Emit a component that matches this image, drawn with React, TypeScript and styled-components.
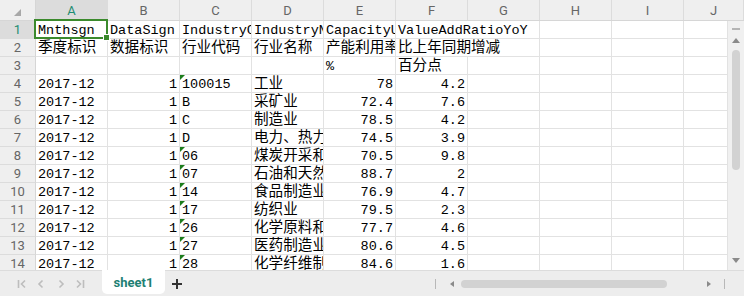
import React from 'react';
import styled, {createGlobalStyle, css} from 'styled-components';

const GlobalStyle = createGlobalStyle`
  html, body {
    margin: 0;
    padding: 0;
    overflow: hidden;
    background: #ffffff;
  }
`;

const COLS = ['A', 'B', 'C', 'D', 'E', 'F', 'G', 'H', 'I', 'J'];
const GRID_COLS = '36px repeat(9, 72px) 44px';
const isCjk = (s: string) => /[\u3000-\u9fff]/.test(s);

const Frame = styled.div`
  width: 744px;
  height: 296px;
  display: flex;
  flex-direction: column;
  background: #ffffff;
  overflow: hidden;
`;

const ColHeaderRow = styled.div`
  display: grid;
  grid-template-columns: 36px repeat(9, 72px) 1fr;
  height: 21px;
  background: #efefef;
  box-sizing: border-box;
  border-bottom: 1px solid #d6d6d6;
`;

const Corner = styled.div`
  position: relative;
  border-right: 1px solid #d6d6d6;
  &::after {
    content: '';
    position: absolute;
    right: 14px;
    bottom: 4px;
    border-style: solid;
    border-width: 0 0 7px 7px;
    border-color: transparent transparent #a8a8a8 transparent;
  }
`;

const ColHeader = styled.div<{ $active?: boolean }>`
  display: flex;
  align-items: center;
  justify-content: center;
  font-family: Roboto, "Noto Sans", sans-serif;
  font-size: 13px;
  color: #666;
  box-sizing: border-box;
  border-right: 1px solid #dcdcdc;
  ${p => p.$active && css`
    background: #dcdcdc;
    color: #1f8c73;
  `}
`;

const Body = styled.div`
  display: flex;
  height: 249px;
  overflow: hidden;
`;

const CellGrid = styled.div`
  display: grid;
  grid-template-columns: ${GRID_COLS};
  grid-auto-rows: 18px;
  flex: 1;
  align-content: start;
  overflow: hidden;
`;

const RowHeader = styled.div<{ $active?: boolean }>`
  display: flex;
  align-items: center;
  justify-content: center;
  font-family: Roboto, "Noto Sans", sans-serif;
  font-size: 13px;
  color: #666;
  background: #efefef;
  box-sizing: border-box;
  border-right: 1px solid #d6d6d6;
  border-bottom: 1px solid #dcdcdc;
  ${p => p.$active && css`
    background: #dcdcdc;
    color: #1f8c73;
  `}
`;

const Cell = styled.div<{ $right?: boolean; $span?: number; $cjk?: boolean }>`
  position: relative;
  box-sizing: border-box;
  border-right: 1px solid #e2e2e2;
  border-bottom: 1px solid #e2e2e2;
  padding: 1px 2px 0 2px;
  font-family: "Liberation Mono", "Noto Sans CJK SC", monospace;
  font-size: ${p => (p.$cjk ? '14.6px' : '13.5px')};
  line-height: 17px;
  color: #000;
  white-space: nowrap;
  overflow: hidden;
  text-align: ${p => (p.$right ? 'right' : 'left')};
  grid-column: span ${p => p.$span ?? 1};
`;

const TextMark = styled.span`
  position: absolute;
  left: 0;
  top: 0;
  border-style: solid;
  border-width: 5px 5px 0 0;
  border-color: #1c7d1c transparent transparent transparent;
`;

const Selection = styled.div`
  position: absolute;
  left: 34px;
  top: 19px;
  width: 74px;
  height: 20px;
  box-sizing: border-box;
  border: 2px solid #3b8a2d;
  pointer-events: none;
  &::after {
    content: '';
    position: absolute;
    right: -4px;
    bottom: -4px;
    width: 5px;
    height: 5px;
    background: #3b8a2d;
    border: 1px solid #fff;
  }
`;

const VScroll = styled.div`
  width: 16px;
  background: #f0f0f0;
  display: flex;
  flex-direction: column;
  align-items: center;
  padding-top: 7px;
  box-sizing: border-box;
`;

const Dash = styled.div`
  width: 8px;
  height: 2px;
  background: #b4b4b4;
`;

const Arrow = styled.div<{ $dir: 'up' | 'down' | 'left' | 'right' }>`
  width: 0;
  height: 0;
  border-style: solid;
  ${p => p.$dir === 'up' && css`
    border-width: 0 4px 5px 4px;
    border-color: transparent transparent #8a8a8a transparent;
  `}
  ${p => p.$dir === 'down' && css`
    border-width: 5px 4px 0 4px;
    border-color: #8a8a8a transparent transparent transparent;
  `}
  ${p => p.$dir === 'left' && css`
    border-width: 3px 4px 3px 0;
    border-color: transparent #8a8a8a transparent transparent;
  `}
  ${p => p.$dir === 'right' && css`
    border-width: 3px 0 3px 4px;
    border-color: transparent transparent transparent #8a8a8a;
  `}
`;

const Gap = styled.div<{ $w?: number; $h?: number }>`
  flex: none;
  width: ${p => p.$w ?? 0}px;
  height: ${p => p.$h ?? 0}px;
`;

const VThumb = styled.div`
  width: 8px;
  height: 120px;
  margin-top: 7px;
  border-radius: 4px;
  background: #d2d2d2;
`;

const VSpacer = styled.div`
  flex: 1;
`;

const TabBar = styled.div`
  height: 26px;
  background: #ededed;
  border-top: 1px solid #dcdcdc;
  box-sizing: border-box;
  display: flex;
  align-items: flex-start;
`;

const NavGroup = styled.div`
  display: flex;
  align-items: center;
  height: 25px;
  padding-left: 12px;
  width: 90px;
  box-sizing: border-box;
`;

const NavBtn = styled.div`
  width: 21px;
  height: 25px;
  display: flex;
  align-items: center;
  justify-content: center;
  color: #bdbdbd;
`;

const Tab = styled.div`
  margin-left: 12px;
  width: 63px;
  height: 24px;
  margin-top: -1px;
  background: #fff;
  border-radius: 0 0 5px 5px;
  display: flex;
  align-items: center;
  justify-content: center;
  font-family: Roboto, "Noto Sans", sans-serif;
  font-weight: 700;
  font-size: 13px;
  color: #1e7f73;
`;

const AddTab = styled.div`
  width: 24px;
  height: 25px;
  display: flex;
  align-items: center;
  justify-content: center;
  color: #333;
`;

const HScroll = styled.div`
  margin-left: auto;
  display: flex;
  align-items: center;
  height: 25px;
  padding-right: 19px;
`;

const Bar = styled.div`
  width: 1px;
  height: 10px;
  background: #b8b8b8;
`;

const HThumb = styled.div`
  width: 206px;
  height: 8px;
  border-radius: 4px;
  background: #d2d2d2;
`;

type Row = [string, string, string, string, string, string];

const rows: Row[] = [
    ['2017-12', '1', '100015', '工业', '78', '4.2'],
    ['2017-12', '1', 'B', '采矿业', '72.4', '7.6'],
    ['2017-12', '1', 'C', '制造业', '78.5', '4.2'],
    ['2017-12', '1', 'D', '电力、热力生产和供应业', '74.5', '3.9'],
    ['2017-12', '1', '06', '煤炭开采和洗选业', '70.5', '9.8'],
    ['2017-12', '1', '07', '石油和天然气开采业', '88.7', '2'],
    ['2017-12', '1', '14', '食品制造业', '76.9', '4.7'],
    ['2017-12', '1', '17', '纺织业', '79.5', '2.3'],
    ['2017-12', '1', '26', '化学原料和化学制品制造业', '77.7', '4.6'],
    ['2017-12', '1', '27', '医药制造业', '80.6', '4.5'],
    ['2017-12', '1', '28', '化学纤维制造业', '84.6', '1.6'],
];

const Empty: React.FC<{ n: number }> = ({n}) => (
    <>{Array.from({length: n}, (_, i) => <Cell key={i}/>)}</>
);

const Text: React.FC<{ v: string; right?: boolean; span?: number }> = ({v, right, span}) => (
    <Cell $right={right} $span={span} $cjk={isCjk(v)}>{v}</Cell>
);

const NavIcon: React.FC<{ kind: 'first' | 'prev' | 'next' | 'last' }> = ({kind}) => (
    <svg width="12" height="12" viewBox="0 0 12 12" fill="none" stroke="currentColor" strokeWidth="1.6">
        {kind === 'first' && <><path d="M2.5 2v8"/><path d="M9 2.5L5.5 6 9 9.5"/></>}
        {kind === 'prev' && <path d="M7.5 2.5L4 6l3.5 3.5"/>}
        {kind === 'next' && <path d="M4.5 2.5L8 6l-3.5 3.5"/>}
        {kind === 'last' && <><path d="M3 2.5L6.5 6 3 9.5"/><path d="M9.5 2v8"/></>}
    </svg>
);

export default function App() {
    return (
        <Frame>
            <GlobalStyle/>
            <ColHeaderRow>
                <Corner/>
                {COLS.map(c => <ColHeader key={c} $active={c === 'A'}>{c}</ColHeader>)}
            </ColHeaderRow>
            <Body>
                <CellGrid>
                    <RowHeader $active>1</RowHeader>
                    <Text v="Mnthsgn"/>
                    <Text v="DataSign"/>
                    <Text v="IndustryCode"/>
                    <Text v="IndustryName"/>
                    <Text v="CapacityUtilization"/>
                    <Text v="ValueAddRatioYoY" span={2}/>
                    <Empty n={3}/>

                    <RowHeader>2</RowHeader>
                    <Text v="季度标识"/>
                    <Text v="数据标识"/>
                    <Text v="行业代码"/>
                    <Text v="行业名称"/>
                    <Text v="产能利用率"/>
                    <Text v="比上年同期增减" span={2}/>
                    <Empty n={3}/>

                    <RowHeader>3</RowHeader>
                    <Empty n={4}/>
                    <Text v="%"/>
                    <Text v="百分点"/>
                    <Empty n={4}/>

                    {rows.map((r, i) => (
                        <React.Fragment key={i}>
                            <RowHeader>{i + 4}</RowHeader>
                            <Text v={r[0]}/>
                            <Text v={r[1]} right/>
                            <Cell>
                                {/^\d+$/.test(r[2]) && <TextMark/>}
                                {r[2]}
                            </Cell>
                            <Text v={r[3]}/>
                            <Text v={r[4]} right/>
                            <Text v={r[5]} right/>
                            <Empty n={4}/>
                        </React.Fragment>
                    ))}
                </CellGrid>
                <VScroll>
                    <Dash/>
                    <Gap $h={8}/>
                    <Arrow $dir="up"/>
                    <VThumb/>
                    <VSpacer/>
                    <Arrow $dir="down"/>
                    <Gap $h={7}/>
                </VScroll>
            </Body>
            <TabBar>
                <NavGroup>
                    <NavBtn><NavIcon kind="first"/></NavBtn>
                    <NavBtn><NavIcon kind="prev"/></NavBtn>
                    <NavBtn><NavIcon kind="next"/></NavBtn>
                    <NavBtn><NavIcon kind="last"/></NavBtn>
                </NavGroup>
                <Tab>sheet1</Tab>
                <AddTab>
                    <svg width="12" height="12" viewBox="0 0 12 12" stroke="currentColor" strokeWidth="2">
                        <path d="M6 1v10M1 6h10"/>
                    </svg>
                </AddTab>
                <HScroll>
                    <Bar/>
                    <Gap $w={14}/>
                    <Arrow $dir="left"/>
                    <Gap $w={7}/>
                    <HThumb/>
                    <Gap $w={40}/>
                    <Arrow $dir="right"/>
                    <Gap $w={13}/>
                    <Bar/>
                </HScroll>
            </TabBar>
            <Selection/>
        </Frame>
    );
}
